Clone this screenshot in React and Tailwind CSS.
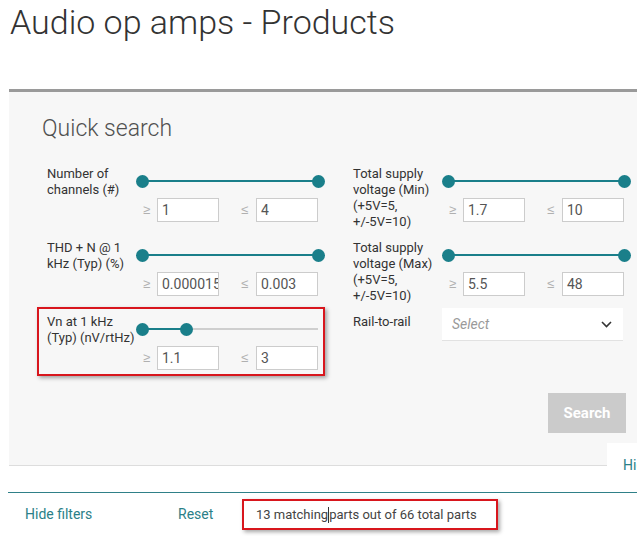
import React from 'react';

const TEAL = 'bg-[#1a7f8a]';

function Slider({ from = 0, to = 188 }) {
  // from / to are knob centres in px inside a 188px wide track area
  const full = to >= 182;
  return (
    <div className="relative h-[30px] w-[188px]">
      <div className="absolute left-[6px] right-[6px] top-[14px] h-[2px] bg-[#cfcfcf]"></div>
      <div
        className={`absolute top-[14px] h-[2px] ${TEAL}`}
        style={{ left: from + 6, width: (full ? 182 : to) - from - 6 }}
      ></div>
      <div className={`absolute left-0 top-[9px] w-[13px] h-[13px] rounded-full ${TEAL}`}></div>
      <div
        className={`absolute top-[9px] w-[13px] h-[13px] rounded-full ${TEAL}`}
        style={{ left: (full ? 182 : to) - 6.5 }}
      ></div>
    </div>
  );
}

function ValueBox({ value }) {
  return (
    <div className="w-[62px] h-[24px] border border-[#cccccc] bg-white pl-[4px] overflow-hidden whitespace-nowrap text-[14px] leading-[22px] text-[#555]">
      {value}
    </div>
  );
}

function RangeInputs({ min, max }) {
  return (
    <div className="mt-[2px] flex items-center h-[24px] pl-[7px] gap-[22px]">
      <div className="flex items-center gap-[7px]">
        <span className="w-[7px] text-[13px] text-[#b0b0b0] font-['Noto_Sans',sans-serif]">≥</span>
        <ValueBox value={min} />
      </div>
      <div className="flex items-center gap-[8px]">
        <span className="w-[7px] text-[13px] text-[#b0b0b0] font-['Noto_Sans',sans-serif]">≤</span>
        <ValueBox value={max} />
      </div>
    </div>
  );
}

function RangeFilter({ label, min, max, knob }) {
  return (
    <div className="flex">
      <div className="w-[89px] shrink-0">
        <p className="w-[92px] text-[13px] leading-[16px] text-[#333]">{label}</p>
      </div>
      <div className="w-[188px]">
        <Slider to={knob} />
        <RangeInputs min={min} max={max} />
      </div>
    </div>
  );
}

export default function App() {
  return (
    <div className="w-[637px] h-[536px] overflow-hidden bg-white font-['Roboto',sans-serif]">
      <h1 className="pl-[10px] pt-[2px] text-[34px] leading-[40px] font-light text-[#333] whitespace-nowrap">
        Audio op amps - Products
      </h1>

      <div className="relative mt-[47px] ml-[9px] w-[700px] bg-[#f7f7f7] border-t-[3px] border-t-[#9a9a9a] border-b border-b-[#dddddd] pt-[23px] pl-[33px] pb-[32px]">
        <h2 className="text-[23px] leading-[28px] font-light text-[#505050]">Quick search</h2>

        <div className="mt-[23px] ml-[5px] grid grid-cols-[277px_277px] gap-x-[29px] gap-y-[10px] items-start">
          <RangeFilter label="Number of channels (#)" min="1" max="4" knob={188} />
          <RangeFilter label="Total supply voltage (Min) (+5V=5, +/-5V=10)" min="1.7" max="10" knob={188} />
          <RangeFilter label="THD + N @ 1 kHz (Typ) (%)" min="0.000015" max="0.003" knob={188} />
          <RangeFilter label="Total supply voltage (Max) (+5V=5, +/-5V=10)" min="5.5" max="48" knob={188} />

          <div className="relative">
            <RangeFilter label="Vn at 1 kHz (Typ) (nV/rtHz)" min="1.1" max="3" knob={50} />
            <div className="pointer-events-none absolute -left-[10px] -top-[7px] w-[288px] h-[69px] border-2 border-[#d8161d] shadow-[2px_2px_4px_rgba(0,0,0,0.35)]"></div>
          </div>

          <div className="flex">
            <div className="w-[89px] shrink-0 text-[13px] leading-[16px] text-[#333]">Rail-to-rail</div>
            <div className="-mt-[6px] w-[181px] h-[33px] bg-white border-b border-[#e2e2e2] flex items-center justify-between pl-[10px] pr-[11px]">
              <span className="text-[14px] italic text-[#9a9a9a]">Select</span>
              <svg width="11" height="7" viewBox="0 0 11 7" fill="none">
                <polyline points="1,1 5.5,5.5 10,1" stroke="#333" strokeWidth="1.6" />
              </svg>
            </div>
          </div>
        </div>

        <div className="mt-[23px] ml-[5px] w-[583px] flex justify-end">
          <button className="mr-[4px] w-[78px] h-[40px] bg-[#cbcbcb] text-white text-[15px] font-bold">Search</button>
        </div>

        <div className="absolute left-[598px] top-[351px] w-[100px] h-[40px] bg-white z-10 pl-[16px] pt-[12px] text-[14px] leading-[20px] text-[#2b7f88] whitespace-nowrap">
          Hide filters
        </div>
      </div>

      <div className="mt-[26px] ml-[8px] h-[1px] bg-[#2f8088]"></div>

      <div className="mt-[6px] pl-[25px] flex items-center h-[31px]">
        <span className="w-[153px] text-[14px] text-[#2b7f88]">Hide filters</span>
        <span className="w-[64px] text-[14px] text-[#2b7f88]">Reset</span>
        <div className="w-[256px] h-[31px] border-2 border-[#d8161d] shadow-[2px_2px_4px_rgba(0,0,0,0.35)] flex items-center pl-[12px] text-[13px] text-[#444] whitespace-nowrap">
          13 matching<span className="inline-block w-[1px] h-[16px] bg-[#333]"></span> parts out of 66 total parts
        </div>
      </div>
    </div>
  );
}
